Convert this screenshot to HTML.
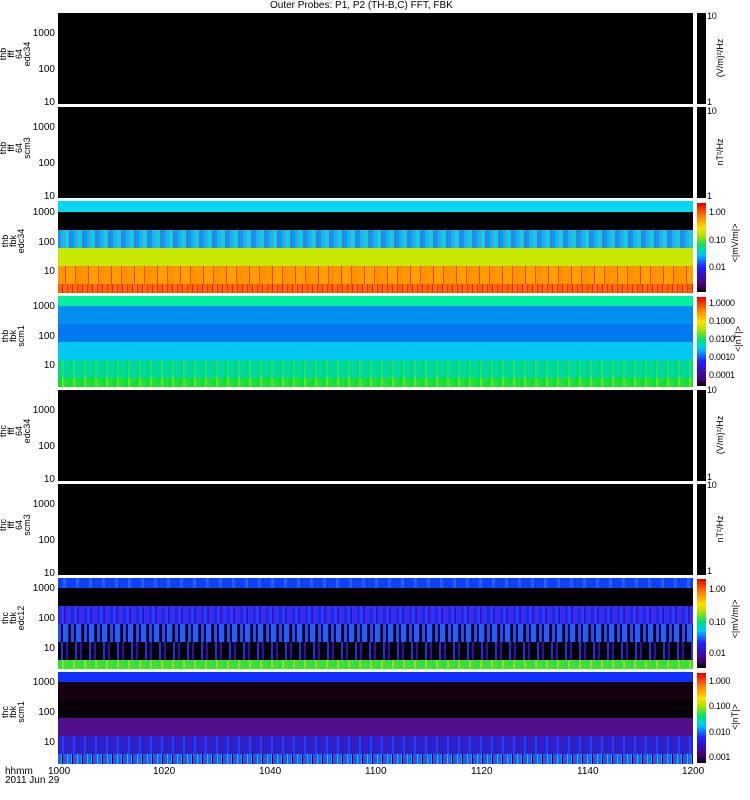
<!DOCTYPE html>
<html><head><meta charset="utf-8"><style>
body{margin:0;width:750px;height:800px;background:#fff;position:relative;overflow:hidden;font-family:"Liberation Sans",sans-serif;font-size:10px;color:#000}
.p{position:absolute;left:58px;width:635px;background:#000;overflow:hidden}
.b{position:absolute;left:0;width:100%}
.cb{position:absolute;left:697px;width:9px;background:#000}
.rb{background:linear-gradient(to top,#000 0%,#4a0070 8%,#2020ff 28%,#00c8ff 42%,#00e070 52%,#a0e000 62%,#ffe000 72%,#ff8000 85%,#e00000 100%)}
.t{position:absolute;font-size:10px;line-height:10px;white-space:nowrap}
.s{font-size:9px;letter-spacing:-0.3px}
.yl{position:absolute;right:695px;text-align:right}
.lab{position:absolute;transform:rotate(-90deg);transform-origin:center;text-align:center;font-size:9px;line-height:8px;width:60px}
.u{position:absolute;transform:rotate(-90deg);font-size:9px;white-space:nowrap;width:60px;text-align:center}
</style></head><body>
<div class="t" style="left:270px;top:1px">Outer Probes: P1, P2 (TH-B,C) FFT, FBK</div>

<div class="p" style="top:13px;height:91px"></div>
<div class="p" style="top:107px;height:91px"></div>

<div class="p" style="top:201px;height:92px">
<div class="b" style="top:0;height:11px;background:#00d8f0"></div>
<div class="b" style="top:11px;height:18px;background:#000"></div>
<div class="b" style="top:29px;height:18px;background:repeating-linear-gradient(90deg,#2090f0 0 3px,#00c0e0 3px 5px,#40a0ff 5px 7px,#10d0d0 7px 11px,#3080f0 11px 13px)"></div>
<div class="b" style="top:47px;height:18px;background:#c8e800"></div>
<div class="b" style="top:65px;height:18px;background:repeating-linear-gradient(90deg,#ff9800 0 7px,#f04010 7px 8px,#ffa000 8px 17px,#f05010 17px 18px,#ff9000 18px 23px)"></div>
<div class="b" style="top:83px;height:9px;background:repeating-linear-gradient(90deg,#ff6000 0 4px,#e02000 4px 5px,#ff7000 5px 9px,#f03000 9px 10px)"></div>
</div>

<div class="p" style="top:296px;height:91px">
<div class="b" style="top:0;height:10px;background:#00f0a0"></div>
<div class="b" style="top:10px;height:18px;background:#0090f0"></div>
<div class="b" style="top:28px;height:18px;background:#0078f0"></div>
<div class="b" style="top:46px;height:18px;background:#00c8f0"></div>
<div class="b" style="top:64px;height:18px;background:repeating-linear-gradient(90deg,#00d890 0 4px,#20e070 4px 6px,#00d8a0 6px 11px)"></div>
<div class="b" style="top:82px;height:9px;background:repeating-linear-gradient(90deg,#10e030 0 4px,#70e020 4px 6px,#20e040 6px 11px)"></div>
</div>

<div class="p" style="top:390px;height:91px"></div>
<div class="p" style="top:484px;height:91px"></div>

<div class="p" style="top:578px;height:91px">
<div class="b" style="top:0;height:10px;background:repeating-linear-gradient(90deg,#1040ff 0 5px,#2060ff 5px 8px,#1040f0 8px 13px)"></div>
<div class="b" style="top:10px;height:18px;background:#000"></div>
<div class="b" style="top:28px;height:18px;background:repeating-linear-gradient(90deg,#3020e0 0 3px,#2040ff 3px 6px,#4010c0 6px 8px,#3030f0 8px 13px)"></div>
<div class="b" style="top:46px;height:18px;background:repeating-linear-gradient(90deg,#2050f0 0 3px,#100040 3px 5px,#2060ff 5px 10px,#400060 10px 11px,#000 11px 13px)"></div>
<div class="b" style="top:64px;height:18px;background:repeating-linear-gradient(90deg,#000 0 3px,#2030e0 3px 5px,#100020 5px 8px,#3010a0 8px 10px,#000 10px 14px)"></div>
<div class="b" style="top:82px;height:9px;background:repeating-linear-gradient(90deg,#30e040 0 4px,#90e020 4px 6px,#40e030 6px 11px)"></div>
</div>

<div class="p" style="top:672px;height:92px">
<div class="b" style="top:0;height:10px;background:#1030ff"></div>
<div class="b" style="top:10px;height:18px;background:#140010"></div>
<div class="b" style="top:28px;height:18px;background:#080008"></div>
<div class="b" style="top:46px;height:18px;background:#50108a"></div>
<div class="b" style="top:64px;height:18px;background:repeating-linear-gradient(90deg,#3020d0 0 4px,#2040ff 4px 6px,#3020c0 6px 11px)"></div>
<div class="b" style="top:82px;height:10px;background:repeating-linear-gradient(90deg,#2060ff 0 3px,#10a0ff 3px 4px,#000 4px 5px,#3050f0 5px 9px,#20c0f0 9px 10px)"></div>
</div>

<div class="cb" style="top:13px;height:91px"></div>
<div class="cb" style="top:107px;height:91px"></div>
<div class="cb rb" style="top:203px;height:89px"></div>
<div class="cb rb" style="top:297px;height:89px"></div>
<div class="cb" style="top:390px;height:91px"></div>
<div class="cb" style="top:484px;height:91px"></div>
<div class="cb rb" style="top:579px;height:89px"></div>
<div class="cb rb" style="top:673px;height:90px"></div>

<div class="t s" style="left:707px;top:11px">10</div><div class="t s" style="left:707px;top:97px">1</div>
<div class="t s" style="left:707px;top:106px">10</div><div class="t s" style="left:707px;top:191px">1</div>
<div class="t s" style="left:709px;top:207px">1.00</div><div class="t s" style="left:709px;top:235px">0.10</div><div class="t s" style="left:709px;top:262px">0.01</div>
<div class="t s" style="left:709px;top:298px">1.0000</div><div class="t s" style="left:709px;top:316px">0.1000</div><div class="t s" style="left:709px;top:334px">0.0100</div><div class="t s" style="left:709px;top:352px">0.0010</div><div class="t s" style="left:709px;top:370px">0.0001</div>
<div class="t s" style="left:707px;top:385px">10</div><div class="t s" style="left:707px;top:472px">1</div>
<div class="t s" style="left:707px;top:480px">10</div><div class="t s" style="left:707px;top:566px">1</div>
<div class="t s" style="left:709px;top:584px">1.00</div><div class="t s" style="left:709px;top:617px">0.10</div><div class="t s" style="left:709px;top:648px">0.01</div>
<div class="t s" style="left:709px;top:676px">1.000</div><div class="t s" style="left:709px;top:701px">0.100</div><div class="t s" style="left:709px;top:727px">0.010</div><div class="t s" style="left:709px;top:752px">0.001</div>

<div class="u" style="left:690px;top:53px">(V/m)²/Hz</div>
<div class="u" style="left:690px;top:147px">nT²/Hz</div>
<div class="u" style="left:705px;top:238px">&lt;|mV/m|&gt;</div>
<div class="u" style="left:708px;top:334px">&lt;|nT|&gt;</div>
<div class="u" style="left:690px;top:430px">(V/m)²/Hz</div>
<div class="u" style="left:690px;top:524px">nT²/Hz</div>
<div class="u" style="left:705px;top:614px">&lt;|mV/m|&gt;</div>
<div class="u" style="left:705px;top:712px">&lt;|nT|&gt;</div>

<div class="t yl" style="top:29px">1000</div><div class="t yl" style="top:65px">100</div><div class="t yl" style="top:98px">10</div>
<div class="t yl" style="top:123px">1000</div><div class="t yl" style="top:159px">100</div><div class="t yl" style="top:192px">10</div>
<div class="t yl" style="top:208px">1000</div><div class="t yl" style="top:238px">100</div><div class="t yl" style="top:267px">10</div>
<div class="t yl" style="top:302px">1000</div><div class="t yl" style="top:332px">100</div><div class="t yl" style="top:361px">10</div>
<div class="t yl" style="top:406px">1000</div><div class="t yl" style="top:442px">100</div><div class="t yl" style="top:475px">10</div>
<div class="t yl" style="top:500px">1000</div><div class="t yl" style="top:536px">100</div><div class="t yl" style="top:569px">10</div>
<div class="t yl" style="top:584px">1000</div><div class="t yl" style="top:614px">100</div><div class="t yl" style="top:644px">10</div>
<div class="t yl" style="top:678px">1000</div><div class="t yl" style="top:708px">100</div><div class="t yl" style="top:738px">10</div>

<div class="lab" style="left:-15px;top:38px">thb<br>fff<br>64<br>edc34</div>
<div class="lab" style="left:-15px;top:132px">thb<br>fff<br>64<br>scm3</div>
<div class="lab" style="left:-17px;top:229px">thb<br>fbk<br>edc34</div>
<div class="lab" style="left:-17px;top:324px">thb<br>fbk<br>scm1</div>
<div class="lab" style="left:-15px;top:415px">thc<br>fff<br>64<br>edc34</div>
<div class="lab" style="left:-15px;top:509px">thc<br>fff<br>64<br>scm3</div>
<div class="lab" style="left:-17px;top:606px">thc<br>fbk<br>edc12</div>
<div class="lab" style="left:-17px;top:700px">thc<br>fbk<br>scm1</div>

<div class="t" style="left:5px;top:767px">hhmm</div>
<div class="t" style="left:5px;top:776px">2011 Jun 29</div>
<div class="t" style="left:48px;top:767px">1000</div>
<div class="t" style="left:153px;top:767px">1020</div>
<div class="t" style="left:259px;top:767px">1040</div>
<div class="t" style="left:365px;top:767px">1100</div>
<div class="t" style="left:471px;top:767px">1120</div>
<div class="t" style="left:577px;top:767px">1140</div>
<div class="t" style="left:682px;top:767px">1200</div>
</body></html>
